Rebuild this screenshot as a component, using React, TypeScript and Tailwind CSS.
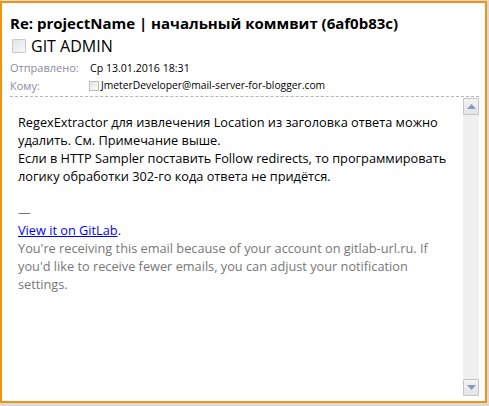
import React from "react";

const font = { fontFamily: '"Open Sans", "Noto Sans", sans-serif' };

function Check({ size }: { size: "lg" | "sm" }) {
  return (
    <span
      className={
        size === "lg"
          ? "inline-block w-[14px] h-[14px] border border-[#c8c8c8] bg-gradient-to-br from-[#e4e4e4] to-[#f8f8f8] rounded-[1px]"
          : "inline-block w-[10px] h-[10px] border border-[#bdbdbd] bg-gradient-to-br from-[#e6e6e6] to-[#fafafa]"
      }
    />
  );
}

export default function App() {
  return (
    <div className="w-[489px] h-[406px] bg-[#dadada] pt-px overflow-hidden" style={font}>
      <div className="w-[487px] h-[402px] border-2 border-[#f29410] bg-white flex flex-col">
        {/* header */}
        <div className="pl-[8px] pr-[6px] pt-[9px]">
          <div className="text-[15px] font-bold text-black leading-[22px] whitespace-nowrap">
            Re: projectName | начальный коммвит (6af0b83c)
          </div>
          <div className="flex items-center h-[22px] mt-[1px] pl-[2px]">
            <Check size="lg" />
            <span className="ml-[5px] text-[16px] text-black leading-[22px]">GIT ADMIN</span>
          </div>
          <div className="flex items-center h-[18px] mt-[2px] text-[11px] leading-[18px]">
            <span className="w-[80px] text-[#8a8aa6]">Отправлено:</span>
            <span className="text-black text-[10.6px]">Ср 13.01.2016 18:31</span>
          </div>
          <div className="flex items-center h-[17px] text-[11px] leading-[17px]">
            <span className="w-[79px] text-[#8a8aa6]">Кому:</span>
            <Check size="sm" />
            <span className="ml-[2px] text-black text-[10.3px]">JmeterDeveloper@mail-server-for-blogger.com</span>
          </div>
          <div className="mt-[2px] mr-0 border-t border-dashed border-[#b4b4b4]" />
        </div>
        {/* body */}
        <div className="flex flex-1 min-h-0 pb-[5px]">
          <div className="flex-1 pl-[16px] pt-[16px] text-[12.75px] leading-[18px] text-black">
            <div className="whitespace-nowrap">RegexExtractor для извлечения Location из заголовка ответа можно</div>
            <div className="whitespace-nowrap">удалить. См. Примечание выше.</div>
            <div className="whitespace-nowrap">Если в HTTP Sampler поставить Follow redirects, то программировать</div>
            <div className="whitespace-nowrap">логику обработки 302-го кода ответа не придётся.</div>
            <div>&nbsp;</div>
            <div className="font-light">—</div>
            <div>
              <a className="text-[#0000ff] underline" href="#">View it on GitLab</a>.
            </div>
            <div className="text-[#777777] whitespace-nowrap">You're receiving this email because of your account on gitlab-url.ru. If</div>
            <div className="text-[#777777] whitespace-nowrap">you'd like to receive fewer emails, you can adjust your notification</div>
            <div className="text-[#777777]">settings.</div>
          </div>
          <div className="w-[16px] mr-[6px] mt-[1px] flex flex-col bg-[#f0f0f0]">
            <div className="h-[17px] border border-[#c5c5c5] rounded-[1px] bg-gradient-to-b from-[#f4f4f4] to-[#e4e4e4] flex items-center justify-center">
              <svg width="9" height="5" viewBox="0 0 9 5"><path d="M4.5 0 L9 5 L0 5 Z" fill="#8c96c0" /></svg>
            </div>
            <div className="flex-1" />
            <div className="h-[17px] border border-[#c5c5c5] rounded-[1px] bg-gradient-to-b from-[#f4f4f4] to-[#e4e4e4] flex items-center justify-center">
              <svg width="9" height="5" viewBox="0 0 9 5"><path d="M0 0 L9 0 L4.5 5 Z" fill="#8c96c0" /></svg>
            </div>
          </div>
        </div>
      </div>
    </div>
  );
}
